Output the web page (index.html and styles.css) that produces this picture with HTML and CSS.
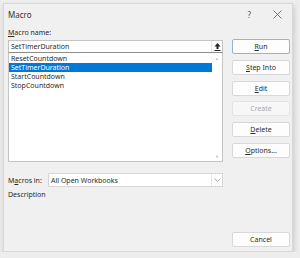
FILE: index.html
```html
<!DOCTYPE html>
<html lang="en">
<head>
  <meta charset="UTF-8">
  <title>Macro</title>
  <link rel="stylesheet" href="styles.css">
</head>
<body>
  <div class="dialog">
    <div class="titlebar">
      <span class="title">Macro</span>
      <span class="help">?</span>
      <span class="close">
        <svg width="9" height="9" viewBox="0 0 9 9"><path d="M0.5 0.5 L8.5 8.5 M8.5 0.5 L0.5 8.5" stroke="#555" stroke-width="0.8" fill="none"/></svg>
      </span>
    </div>

    <div class="body">
      <div class="left">
        <div class="label"><u>M</u>acro name:</div>
        <div class="name-box">
          <span class="name-text">SetTimerDuration</span>
          <span class="up-btn">
            <svg width="7" height="8" viewBox="0 0 7 8"><path d="M3.5 0 L6.5 3.5 L4.5 3.5 L4.5 6 L2.5 6 L2.5 3.5 L0.5 3.5 Z" fill="#222"/><rect x="0.5" y="7" width="6" height="1" fill="#222"/></svg>
          </span>
        </div>
        <div class="list">
          <div class="items">
            <div class="item">ResetCountdown</div>
            <div class="item selected">SetTimerDuration</div>
            <div class="item">StartCountdown</div>
            <div class="item">StopCountdown</div>
          </div>
          <div class="scroll">
            <span class="arrow">&#9650;</span>
            <span class="arrow">&#9660;</span>
          </div>
        </div>
        <div class="macros-in">
          <span class="mi-label">M<u>a</u>cros in:</span>
          <div class="select">
            <span class="select-text">All Open Workbooks</span>
            <span class="chevron">
              <svg width="7" height="4" viewBox="0 0 7 4"><path d="M0.5 0.5 L3.5 3.5 L6.5 0.5" stroke="#999" stroke-width="0.8" fill="none"/></svg>
            </span>
          </div>
        </div>
        <div class="desc">Description</div>
      </div>

      <div class="right">
        <div class="buttons">
          <div class="btn default"><u>R</u>un</div>
          <div class="btn"><u>S</u>tep Into</div>
          <div class="btn"><u>E</u>dit</div>
          <div class="btn disabled">Create</div>
          <div class="btn"><u>D</u>elete</div>
          <div class="btn"><u>O</u>ptions...</div>
        </div>
        <div class="btn cancel">Cancel</div>
      </div>
    </div>
  </div>
</body>
</html>
```

FILE: styles.css
```css
body {
  margin: 0;
  background: #ededed;
  font-family: "Noto Sans", "Open Sans", sans-serif;
  font-size: 7px;
  color: #2b2b2b;
}
u { text-decoration-thickness: 0.5px; text-underline-offset: 1px; }

.dialog {
  margin: 3px 0 0 3px;
  width: 290px;
  height: 249px;
  box-sizing: border-box;
  background: #f0f0f0;
  border: 1px solid #d8d8d8;
  box-shadow: 1px 3px 5px rgba(0, 0, 0, 0.16);
  display: flex;
  flex-direction: column;
}

.titlebar {
  height: 20px;
  display: flex;
  align-items: center;
  padding-left: 4px;
}
.title { font-size: 8px; flex: 1; color: #333; }
.help { font-size: 8px; color: #555; margin-right: 22px; }
.close { width: 9px; height: 9px; margin-right: 10px; display: flex; }

.body {
  flex: 1;
  display: flex;
  padding: 0 0 4px 4px;
}

.left { width: 215px; display: flex; flex-direction: column; }

.label { height: 16px; line-height: 12px; padding-top: 3px; box-sizing: border-box; }

.name-box {
  height: 13px;
  box-sizing: border-box;
  background: #fff;
  border: 1px solid #c4c4c4;
  border-bottom-color: #8c8c8c;
  display: flex;
  align-items: center;
}
.name-text { flex: 1; padding-left: 2px; }
.up-btn {
  width: 10px;
  height: 11px;
  border-left: 1px solid #e4e4e4;
  display: flex;
  align-items: center;
  justify-content: center;
}

.list {
  height: 109px;
  box-sizing: border-box;
  background: #fff;
  border: 1px solid #c4c4c4;
  border-top: none;
  display: flex;
}
.items { flex: 1; padding-top: 1px; }
.item { height: 9px; line-height: 9px; padding-left: 2px; }
.item.selected { background: #0078d7; color: #fff; }
.scroll {
  width: 10px;
  display: flex;
  flex-direction: column;
  justify-content: space-between;
  align-items: center;
  padding: 3px 0 2px;
}
.arrow { font-size: 4px; color: #b8b8b8; }

.macros-in {
  margin-top: 11px;
  height: 14px;
  display: flex;
  align-items: center;
}
.mi-label { width: 40px; }
.select {
  flex: 1;
  height: 14px;
  box-sizing: border-box;
  background: #fff;
  border: 1px solid #d6d6d6;
  display: flex;
  align-items: center;
}
.select-text { flex: 1; padding-left: 2px; }
.chevron {
  width: 10px;
  height: 12px;
  border-left: 1px solid #e2e2e2;
  display: flex;
  align-items: center;
  justify-content: center;
}

.desc { margin-top: 2px; line-height: 12px; }

.right {
  width: 58px;
  margin-left: 9px;
  display: flex;
  flex-direction: column;
  justify-content: space-between;
}
.buttons {
  margin-top: 15px;
  display: flex;
  flex-direction: column;
  gap: 5.8px;
}
.btn {
  height: 15px;
  box-sizing: border-box;
  background: #fdfdfd;
  border: 1px solid #d8d8d8;
  border-radius: 2px;
  text-align: center;
  line-height: 13px;
}
.btn.default { border-color: #9db2c8; }
.btn.disabled { color: #aaaaaa; background: #f7f7f7; border-color: #e4e4e4; }
```
